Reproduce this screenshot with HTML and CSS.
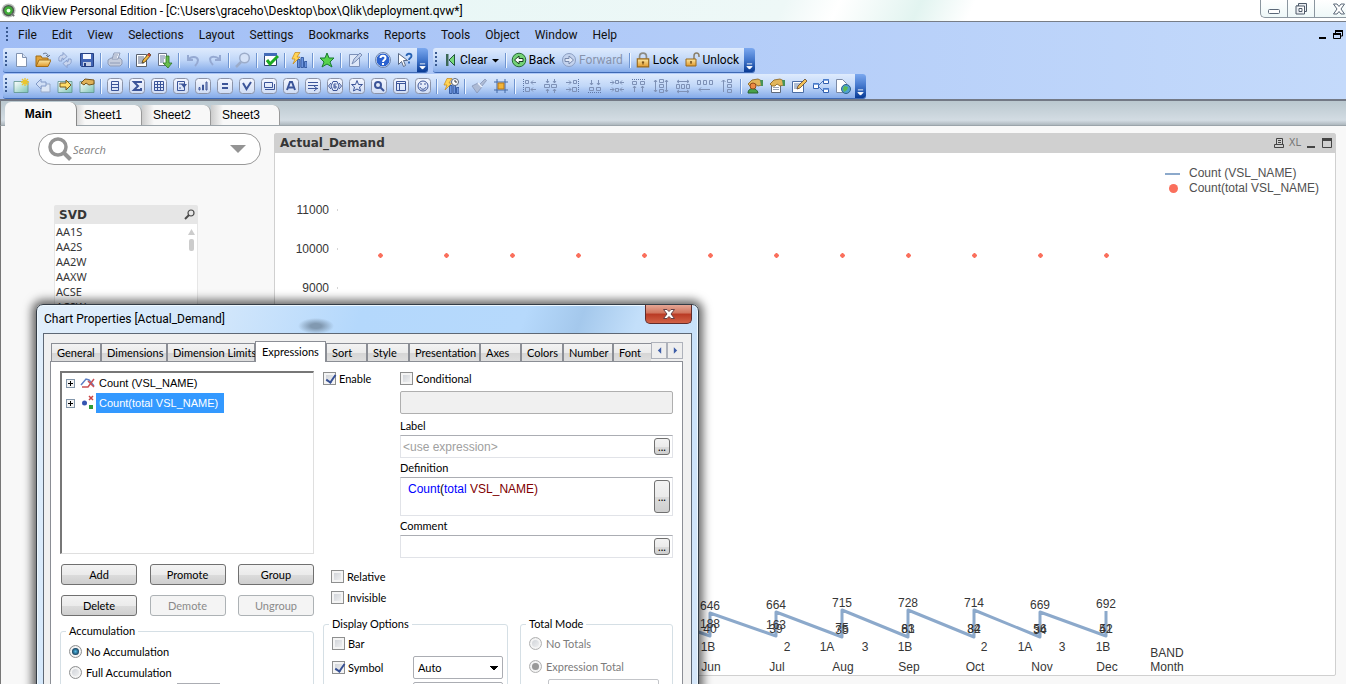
FILE: index.html
```html
<!DOCTYPE html>
<html lang="en">
<head>
<meta charset="utf-8">
<title>QlikView Personal Edition - [C:\Users\graceho\Desktop\box\Qlik\deployment.qvw*]</title>
<link rel="stylesheet" href="styles.css">
</head>
<body>
<svg class="defs" aria-hidden="true">
  <defs>
    <linearGradient id="gold" x1="0" y1="0" x2="0" y2="1"><stop offset="0" stop-color="#fde9a4"/><stop offset="1" stop-color="#e0982a"/></linearGradient>
    <linearGradient id="teal" x1="0" y1="0" x2="1" y2="1"><stop offset="0" stop-color="#ffffff"/><stop offset="1" stop-color="#7cc4b4"/></linearGradient>
    <linearGradient id="steel" x1="0" y1="0" x2="0" y2="1"><stop offset="0" stop-color="#f4f7ff"/><stop offset="1" stop-color="#cfdcf4"/></linearGradient>
    <symbol id="box" viewBox="0 0 16 16"><rect x=".5" y=".5" width="15" height="15" rx="3" fill="url(#steel)" stroke="#8b93a8"/></symbol>
    <symbol id="bars" viewBox="0 0 16 16"><path d="M6.500 7.500h2.500v8h-2.500zM10 5.500h2.500v10H10zM13.500 9.500H16v6h-2.500z" fill="#6b93dc" stroke="#31589f" stroke-width=".9"/><path d="M4 .5h5L6 5h3L2 12l2-5H1z" fill="#ffd456" stroke="#c48617" stroke-width=".7"/></symbol>
    <symbol id="folder" viewBox="0 0 16 16"><path d="M1 3.500h14v11H1z" fill="url(#teal)" stroke="#5d938c" stroke-width=".8"/></symbol>
    <symbol id="hand" viewBox="0 0 16 16"><path d="M1 6l4-4 6-1 4 2v4l-4 1-3-2-2 2H5L3 8z" fill="#e2b55a" stroke="#85601c" stroke-width=".8"/><path d="M13 2h3v6h-2z" fill="#489258"/></symbol>
    <symbol id="arrow-down" viewBox="0 0 8 8"><path d="M1 1h6M1 4h6L4 7z" fill="#fff" stroke="#fff"/></symbol>
    <symbol id="padlock" viewBox="0 0 14 14"><path d="M2 6h10v7H2z" fill="url(#gold)" stroke="#99681a"/><path d="M7 8v3M6 9h2" stroke="#6e4810"/></symbol>
  </defs>
</svg>
<div class="app">
  <header class="titlebar">
    <svg class="logo" viewBox="0 0 16 16"><circle cx="8" cy="8" r="7.500" fill="#b9bfb9"/><circle cx="8" cy="8" r="6" fill="#4d5650"/><circle cx="8" cy="8" r="4.500" fill="#3fae36"/><circle cx="8" cy="8" r="2" fill="#e9ffe5"/><path d="M11 11l3 3" stroke="#6d746f" stroke-width="2"/></svg>
    <h1>QlikView Personal Edition - [C:\Users\graceho\Desktop\box\Qlik\deployment.qvw*]</h1>
    <div class="window-buttons">
      <button aria-label="Minimize"><svg viewBox="0 0 14 14"><rect x="1.500" y="7.500" width="11" height="4" rx="1" fill="#fff" stroke="#5b6878"/></svg></button>
      <button aria-label="Restore"><svg viewBox="0 0 14 14"><path d="M4.500 1.500h8v8h-2v2.500h-8.500v-8h2.500z" fill="#e9edf2" stroke="#4e5a68"/><path d="M2 4h8.500v8M5 6.500h3v3H5z" fill="#fff" stroke="#4e5a68"/></svg></button>
      <button class="wide" aria-label="Close"><svg viewBox="0 0 14 14"><path d="M1.500 2h3.500l2 2.500L9 2h3.500L9 7l3.500 5H9L7 9.500 5 12H1.500L5 7z" fill="#fff" stroke="#5b6878"/></svg></button>
    </div>
  </header>

  <div class="chrome">
    <nav class="menubar">
      <span class="grip"></span>
      <a href="#file">File</a><a href="#edit">Edit</a><a href="#view">View</a><a href="#selections">Selections</a><a href="#layout">Layout</a><a href="#settings">Settings</a><a href="#bookmarks">Bookmarks</a><a href="#reports">Reports</a><a href="#tools">Tools</a><a href="#object">Object</a><a href="#window">Window</a><a href="#help">Help</a>
      <div class="mdi-buttons">
        <button aria-label="Minimize document"><svg viewBox="0 0 12 12"><path d="M2 8h7v2H2z"/></svg></button>
        <button aria-label="Restore document"><svg viewBox="0 0 12 12"><path d="M3.500 4V2h7v5H9" fill="none" stroke="#000"/><path d="M3 1h8v2H3zM1 4h8v2H1z"/><path d="M1.500 5v4.500h7V5" fill="none" stroke="#000"/></svg></button>
      </div>
    </nav>

    <div class="toolbars">
      <div class="toolbar">
        <span class="grip"></span>
        <button class="tool" aria-label="New"><svg viewBox="0 0 16 16"><path d="M3.500 1.500h6l4 4v9h-10z" fill="#fff" stroke="#8193b1"/><path d="M9.500 1.500v4h4" fill="#dce6f6" stroke="#8193b1"/></svg></button>
        <button class="tool" aria-label="Open"><svg viewBox="0 0 16 16"><path d="M1 14V4h5l1 2h6v8z" fill="#e1a43b" stroke="#a26c17"/><path d="M1 14.500L4 8h12l-3 6.500z" fill="url(#gold)" stroke="#a26c17"/><path d="M8 2c3-2 5 0 5 2M11 3l2 2 2-2" fill="none" stroke="#69788f"/></svg></button>
        <button class="tool" aria-label="Refresh"><svg viewBox="0 0 16 16"><path d="M2 9C1 5 3 3 6 3V.500L10 4.500 6 8V6C5 6 4 7 5 9zM14 7c1 4-1 6-4 6v2.500L6 11.500 10 8v2c1 0 2-1 1-3z" fill="#c8d5ee" stroke="#7f96c4" stroke-width=".8"/></svg></button>
        <button class="tool" aria-label="Save"><svg viewBox="0 0 16 16"><path d="M1.500 1.500h13v13h-12l-1-1z" fill="#4164b4" stroke="#253f82"/><path d="M4 2h8v5H4z" fill="#f4f7ff"/><path d="M4 10h8v4H4z" fill="#c2cce3"/><path d="M5 11h2v3H5z" fill="#253f82"/></svg></button>
        <i class="sep"></i>
        <button class="tool" aria-label="Print"><svg viewBox="0 0 16 16"><path d="M1 8l3-2h9l2 2v4l-2 2H3l-2-2z" fill="#c5cddd" stroke="#8e9bb7"/><path d="M5 7l2-6h6l-2 6z" fill="#edf1fa" stroke="#8e9bb7"/><path d="M3 11h10M7 3h4M6 5h4" stroke="#8e9bb7"/></svg></button>
        <i class="sep"></i>
        <button class="tool" aria-label="Edit script"><svg viewBox="0 0 16 16"><path d="M1.500 2.500h10v12h-10z" fill="#fff" stroke="#58606d"/><path d="M3 5h6M3 7h6M3 9h6M3 11h6" stroke="#5c6b85"/><path d="M7 11l1-3 6-7 2 2-6 7z" fill="#f0b73d" stroke="#42381f" stroke-width=".8"/><path d="M13 2l2 2" stroke="#c93f32" stroke-width="2"/></svg></button>
        <button class="tool" aria-label="Reload"><svg viewBox="0 0 16 16"><path d="M1.500 1.500h8v12h-8z" fill="#fff" stroke="#677287"/><path d="M3 4h5M3 6h5M3 8h4M3 10h4" stroke="#65789f"/><path d="M9 4h3v7h3l-4 5-5-5h3z" fill="#68bd4d" stroke="#2f762a" stroke-width=".8"/></svg></button>
        <i class="sep"></i>
        <button class="tool" aria-label="Undo"><svg viewBox="0 0 16 16"><path d="M3 3v5h5M3 8c3-4 9-4 10 0 0 3-1 4-3 6" fill="none" stroke="#95a9d2" stroke-width="2"/></svg></button>
        <button class="tool" aria-label="Redo"><svg viewBox="0 0 16 16"><path d="M13 3v5H8M13 8C10 4 4 4 3 7c0 3 1 4 3 6" fill="none" stroke="#95a9d2" stroke-width="2"/></svg></button>
        <i class="sep"></i>
        <button class="tool" aria-label="Search"><svg viewBox="0 0 16 16"><circle cx="9.500" cy="6" r="4.800" fill="#d5e2f7" stroke="#9cacc9" stroke-width="1.500"/><path d="M6 10l-5 5" stroke="#9cacc9" stroke-width="2.500"/></svg></button>
        <i class="sep"></i>
        <button class="tool" aria-label="Current selections"><svg viewBox="0 0 16 16"><path d="M1.500 1.500h12v12h-12z" fill="#fff" stroke="#31456e"/><path d="M1 1h13v3H1z" fill="#426bb8"/><path d="M4 8l3 4 8-8" fill="none" stroke="#1daa21" stroke-width="3"/></svg></button>
        <i class="sep"></i>
        <button class="tool" aria-label="Quick chart wizard"><svg><use href="#bars"/></svg></button>
        <i class="sep"></i>
        <button class="tool" aria-label="Add bookmark"><svg viewBox="0 0 16 16"><path d="M8 1l2 5h5l-4 4 2 5-5-3-5 3 2-5-4-4h5z" fill="#57d34d" stroke="#187b31"/></svg></button>
        <i class="sep"></i>
        <button class="tool" aria-label="Notes"><svg viewBox="0 0 16 16"><path d="M2.500 2.500h10v12h-10z" fill="#dfe8f8" stroke="#7c90b8"/><path d="M5 12l2-5 6-6 2 2-6 6z" fill="#c5d2ea" stroke="#7c90b8"/></svg></button>
        <i class="sep"></i>
        <button class="tool" aria-label="Help"><svg viewBox="0 0 16 16"><circle cx="8" cy="8" r="7" fill="#2b62d0" stroke="#e5edf9"/><circle cx="8" cy="8" r="7.500" fill="none" stroke="#49618d" stroke-width=".7"/><path d="M5.500 6c0-3 5-3 5 0 0 2-2.500 2-2.500 4M8 11v2" fill="none" stroke="#fff" stroke-width="2"/></svg></button>
        <button class="tool" aria-label="Context help"><svg viewBox="0 0 16 16"><path d="M1.500 1.500v11l3-3 2 5 2-1-2-5h4z" fill="#fff" stroke="#596985"/><path d="M9.500 4c0-3 5-3 5 0 0 2-2.500 2-2.500 4M12 9.500v2" fill="none" stroke="#2862b3" stroke-width="1.800"/></svg></button>
        <button class="overflow" aria-label="More standard tools"><svg><use href="#arrow-down"/></svg></button>
      </div>
      <div class="toolbar navigation">
        <span class="grip"></span>
        <button class="command"><svg viewBox="0 0 16 16"><path d="M4 2h2.500v12H4z" fill="#3c6857"/><path d="M12.500 2.500v11L7 8z" fill="#75d979" stroke="#24563f"/></svg>Clear<svg class="caret" viewBox="0 0 7 5"><path d="M0 1h7L3.500 4.500z"/></svg></button>
        <i class="sep"></i>
        <button class="command"><svg viewBox="0 0 16 16"><circle cx="8" cy="8" r="6.800" fill="#74d376" stroke="#266936"/><path d="M3.500 8L8 4v2.500h4v3H8V12z" fill="#fff" stroke="#193c22"/></svg>Back</button>
        <button class="command" disabled><svg viewBox="0 0 16 16"><circle cx="8" cy="8" r="6.500" fill="#c4d3ee" stroke="#8b9ec2"/><path d="M12.500 8L8 4v2.500H4v3h4V12z" fill="#e1e9f7" stroke="#7889ac"/></svg>Forward</button>
        <i class="sep"></i>
        <button class="command"><svg viewBox="0 0 14 14"><path d="M4 6V4c0-4 6-4 6 0v2" fill="none" stroke="#8c8b84" stroke-width="1.500"/><use href="#padlock"/></svg>Lock</button>
        <button class="command"><svg viewBox="0 0 16 16"><path d="M9 7V4c0-4 5-4 5 0v1" fill="none" stroke="#8b806b" stroke-width="1.500"/><path d="M1 7h10v7H1z" fill="url(#gold)" stroke="#99681a"/><path d="M6 9v3M5 10h2" stroke="#6e4810"/></svg>Unlock</button>
        <button class="overflow" aria-label="More navigation tools"><svg><use href="#arrow-down"/></svg></button>
      </div>
    </div>

    <div class="toolbars">
      <div class="toolbar">
        <span class="grip"></span>
        <button class="tool" aria-label="Add sheet"><svg viewBox="0 0 16 16"><use href="#folder"/><path d="M12 0v8M8 4h8M9 1l6 6M15 1L9 7" stroke="#edc52d" stroke-width="1.300"/></svg></button>
        <button class="tool" aria-label="Promote sheet"><svg viewBox="0 0 16 16"><path d="M6 6h9v8H6z" fill="#dce6f5" stroke="#97a9c8"/><path d="M1 6l5-5v3h5v4H6v3z" fill="#d1dff5" stroke="#8299c7"/></svg></button>
        <button class="tool" aria-label="Demote sheet"><svg viewBox="0 0 16 16"><use href="#folder"/><path d="M14 7L9 2v3H3v4h6v3z" fill="#ffdc68" stroke="#77561b"/></svg></button>
        <button class="tool" aria-label="Sheet properties"><svg viewBox="0 0 16 16"><use href="#folder"/><path d="M2 5l4-4 9 1v4l-5 1-3-2-2 2z" fill="#dfb258" stroke="#74541d"/></svg></button>
        <i class="sep"></i>
        <button class="tool" aria-label="List box"><svg viewBox="0 0 16 16"><use href="#box"/><path d="M4.500 3.500h7v9h-7zM5 6.500h6M5 9.500h6" class="ink"/></svg></button>
        <button class="tool" aria-label="Statistics box"><svg viewBox="0 0 16 16"><use href="#box"/><path d="M12 5V4H5l4 4-4 4h7v-2" class="ink bold"/></svg></button>
        <button class="tool" aria-label="Table box"><svg viewBox="0 0 16 16"><use href="#box"/><path d="M3.500 3.500h9v9h-9zM6.500 3v9M9.500 3v9M3 6.500h9M3 9.500h9" class="ink"/></svg></button>
        <button class="tool" aria-label="Multi box"><svg viewBox="0 0 16 16"><use href="#box"/><path d="M4.500 3.500h7v9h-7zM6 6h5M6 10h2" class="ink"/><path d="M8 6h6l-3 4z" fill="#3c5599"/></svg></button>
        <button class="tool" aria-label="Chart"><svg viewBox="0 0 16 16"><use href="#box"/><path d="M4 9.500h1V12H4zM7.500 7h1v5h-1zM11 4h1v8h-1z" class="ink"/></svg></button>
        <button class="tool" aria-label="Input box"><svg viewBox="0 0 16 16"><use href="#box"/><path d="M5 6h6M5 10h6" class="ink bold"/></svg></button>
        <button class="tool" aria-label="Current selections box"><svg viewBox="0 0 16 16"><use href="#box"/><path d="M4 5l3.500 6L12 4" class="ink bold"/></svg></button>
        <button class="tool" aria-label="Button"><svg viewBox="0 0 16 16"><use href="#box"/><path d="M3.500 4.500h8v5h-8zM4 11.500h9.500V6" class="ink"/></svg></button>
        <button class="tool" aria-label="Text object"><svg viewBox="0 0 16 16"><use href="#box"/><path d="M4 12L7 4h2l3 8M5.500 9.500h5" class="ink bold"/></svg></button>
        <button class="tool" aria-label="Line object"><svg viewBox="0 0 16 16"><use href="#box"/><path d="M3 4.500h10M3 7.500h10M3 10.500h10M9 8l3 2.500L9 13" class="ink"/></svg></button>
        <button class="tool" aria-label="Slider"><svg viewBox="0 0 16 16"><use href="#box"/><path d="M4 5L1.500 8 4 11M12 5l2.500 3-2.500 3M6 3.500h4l2 4.500-2 4.500H6L4 8zM9.500 6H7v4h2V8H7" class="ink"/></svg></button>
        <button class="tool" aria-label="Bookmark object"><svg viewBox="0 0 16 16"><use href="#box"/><path d="M8 2.500l1.500 4H13.500l-3 2.500 1 4L8 11l-3.500 2 1-4-3-2.500h4z" class="ink"/></svg></button>
        <button class="tool" aria-label="Search object"><svg viewBox="0 0 16 16"><use href="#box"/><circle cx="7" cy="7" r="3" class="ink bold"/><path d="M9 9l4 4" class="ink bold"/></svg></button>
        <button class="tool" aria-label="Container"><svg viewBox="0 0 16 16"><use href="#box"/><path d="M3.500 3.500h9v9h-9zM4 5.500h8M6.500 6v6" class="ink"/></svg></button>
        <button class="tool" aria-label="Custom object"><svg viewBox="0 0 16 16"><use href="#box"/><circle cx="8" cy="8" r="5" class="ink"/><path d="M5 9c1 3 5 3 6 0M6 5v2M10 5v2" class="ink"/></svg></button>
        <i class="sep"></i>
        <button class="tool" aria-label="Time chart wizard"><svg viewBox="0 0 16 16"><use href="#bars"/><circle cx="12" cy="4" r="3.500" fill="#fff" stroke="#56647b"/><path d="M12 2v2h2" fill="none" stroke="#333"/></svg></button>
        <i class="sep"></i>
        <button class="tool" aria-label="Format painter"><svg viewBox="0 0 16 16"><path d="M9 6l5-5 1.500 1.500L11 8zM1 8l6-3 4 4-5 6z" fill="#aebbd5" stroke="#8796b6" stroke-width=".8"/><path d="M7 5l4 4" stroke="#eef3fd" stroke-width="1.500"/></svg></button>
        <button class="tool" aria-label="Design grid"><svg viewBox="0 0 16 16"><path d="M4 1v14M12 1v14M1 4h14M1 12h14" stroke="#4269a5"/><path d="M5 5h6v6H5z" fill="#f2b437" stroke="#b67718"/></svg></button>
        <i class="sep"></i>
        <button class="tool" aria-label="Align left"><svg viewBox="0 0 16 16"><path d="M2.500 1v14" class="dots"/><path d="M4.500 2.500h3v3h-3zM4.500 9.500h4v4h-4zM10 4.500h5M10 11.500h5M12 2.500l-2 2 2 2M12 9.500l-2 2 2 2" class="mute"/></svg></button>
        <button class="tool" aria-label="Center horizontally"><svg viewBox="0 0 16 16"><path d="M4.500 1v4M11.500 1v4M4.500 11v4M11.500 11v4M1.500 6.500h5v3h-5zM8.500 6.500h5v3h-5zM3 3l1.500 2L6 3M10 3l1.500 2L13 3M3 13l1.500-2L6 13M10 13l1.500-2 1.500 2" class="mute"/></svg></button>
        <button class="tool" aria-label="Align right"><svg viewBox="0 0 16 16"><path d="M13.500 1v14" class="dots"/><path d="M8.500 2.500h3v3h-3zM7.500 9.500h4v4h-4zM1 4.500h5M1 11.500h5M4 2.500l2 2-2 2M4 9.500l2 2-2 2" class="mute"/></svg></button>
        <button class="tool" aria-label="Align bottom"><svg viewBox="0 0 16 16"><path d="M1 14.500h14" class="dots"/><path d="M2.500 9.500h4v3h-4zM9.500 9.500h4v3h-4zM4.500 2v5M11.500 2v5M3 5l1.500 2L6 5M10 5l1.500 2L13 5" class="mute"/></svg></button>
        <button class="tool" aria-label="Center vertically"><svg viewBox="0 0 16 16"><path d="M6.500 2.500h3v3h-3zM6.500 10.500h3v3h-3zM1 4.500h4M11 4.500h4M1 11.500h4M11 11.500h4M3 2.500l2 2-2 2M13 2.500l-2 2 2 2M3 9.500l2 2-2 2M13 9.500l-2 2 2 2" class="mute"/></svg></button>
        <button class="tool" aria-label="Align top"><svg viewBox="0 0 16 16"><path d="M1 1.500h14" class="dots"/><path d="M1.500 3.500h4v3h-4zM9.500 3.500h4v3h-4zM3.500 8v6M11.500 8v6M2 10l1.500-2L5 10M10 10l1.500-2 1.500 2" class="mute"/></svg></button>
        <button class="tool" aria-label="Space vertically"><svg viewBox="0 0 16 16"><path d="M6.500 1.500h4v3h-4zM6.500 6.500h4v3h-4zM6.500 11.500h4v3h-4zM2.500 2v12M13.500 2v12M1 4l1.500-2L4 4M12 12l1.500 2 1.500-2M1 12l1.500 2L4 12M12 4l1.500-2L15 4" class="mute"/></svg></button>
        <button class="tool" aria-label="Space horizontally"><svg viewBox="0 0 16 16"><path d="M1.500 6.500h3v4h-3zM6.500 6.500h3v4h-3zM11.500 6.500h3v4h-3zM2 3.500h12M2 13.500h12M4 2L2 3.500 4 5M12 2l2 1.500L12 5M12 12l2 1.500-2 1.500M4 12l-2 1.500L4 15" class="mute"/></svg></button>
        <button class="tool" aria-label="Adjust left"><svg viewBox="0 0 16 16"><path d="M.5 2.500h3v4h-3zM6.500 2.500h3v4h-3zM12.500 2.500h3v4h-3zM2 11.500h11M4 9.500l-2 2 2 2" class="mute"/></svg></button>
        <button class="tool" aria-label="Adjust top"><svg viewBox="0 0 16 16"><path d="M8.500 1.500h4v3h-4zM8.500 6.500h4v3h-4zM8.500 11.500h4v3h-4zM4.500 2v12M2.500 4l2-2 2 2" class="mute"/></svg></button>
        <i class="sep"></i>
        <button class="tool" aria-label="User preferences"><svg viewBox="0 0 16 16"><path d="M1 15c0-6 9-6 10 0z" fill="#48a24b" stroke="#27632d"/><use href="#hand"/><circle cx="6" cy="8" r="3" fill="#ee8b45" stroke="#934b1b"/></svg></button>
        <button class="tool" aria-label="Document properties"><svg viewBox="0 0 16 16"><path d="M2.500 4.500h9v10h-9z" fill="#fff" stroke="#606b7b"/><path d="M4 9.500h6M4 11.500h6" stroke="#9aa4b5"/><use href="#hand"/></svg></button>
        <button class="tool" aria-label="Edit module"><svg viewBox="0 0 16 16"><path d="M1.500 3.500h11v11h-11z" fill="#fff" stroke="#4b6da3"/><path d="M3 6h7M3 8h7M3 10h5" stroke="#607fac"/><path d="M6 11l1-3 7-7 2 2-7 7z" fill="#f3c157" stroke="#61452a" stroke-width=".8"/></svg></button>
        <button class="tool" aria-label="Table viewer"><svg viewBox="0 0 16 16"><path d="M5 8l5-5M5 8l5 5" stroke="#4774bd"/><path d="M.5 5.500h5v5h-5zM10.500 1.500h5v4h-5zM10.500 10.500h5v4h-5z" fill="#fff" stroke="#315fae"/><path d="M0 6h6M10 2h6M10 11h6" stroke="#5688d5" stroke-width="1.500"/></svg></button>
        <button class="tool" aria-label="Web view"><svg viewBox="0 0 16 16"><path d="M1.500 1.500h6l4 4v9h-10z" fill="#fff" stroke="#7c8aa5"/><circle cx="11" cy="11" r="4.500" fill="#4fa1d0" stroke="#2e628c"/><path d="M9 8l4 1-1 3-3 2-1-3z" fill="#5dbb52"/></svg></button>
        <button class="overflow" aria-label="More design tools"><svg><use href="#arrow-down"/></svg></button>
      </div>
    </div>
  </div>

  <nav class="sheet-tabs">
    <a class="active" href="#main">Main</a><a href="#sheet1">Sheet1</a><a href="#sheet2">Sheet2</a><a href="#sheet3">Sheet3</a>
  </nav>

  <main class="sheet">
    <aside class="selectors">
      <div class="search">
        <svg class="lens" viewBox="0 0 24 24"><circle cx="10" cy="10" r="8" fill="none" stroke="#949494" stroke-width="3.500"/><path d="M15.500 15.500l7 7" stroke="#949494" stroke-width="4"/></svg>
        <input type="text" aria-label="Search" placeholder="Search">
        <svg class="drop" viewBox="0 0 16 9"><path d="M0 0h16L8 8z" fill="#949494"/></svg>
      </div>
      <section class="listbox">
        <h2>SVD<svg viewBox="0 0 11 11"><circle cx="7" cy="4" r="3" fill="none" stroke="#4b4b4b" stroke-width="1.200"/><path d="M5 6l-4 4" stroke="#4b4b4b" stroke-width="2"/></svg></h2>
        <div class="listbody">
          <ul><li>AA1S</li><li>AA2S</li><li>AA2W</li><li>AAXW</li><li>ACSE</li><li>ACSW</li></ul>
          <div class="scroll"><svg viewBox="0 0 7 6"><path d="M0 6h7L3.500 0z" fill="#ccc"/></svg><span></span></div>
        </div>
      </section>
    </aside>

    <section class="chart">
      <h2><span>Actual_Demand</span>
        <svg viewBox="0 0 12 12"><path d="M3.500 1.500h6v6h-6zM1.500 7.500h9v3h-9zM5 3.500h3M5 5.500h3" fill="none" stroke="#444"/></svg>
        <span class="xl">XL</span>
        <svg viewBox="0 0 12 12"><path d="M2 9h8v2H2z" fill="#444"/></svg>
        <svg viewBox="0 0 12 12"><path d="M1.500 1.500h9v9h-9z" fill="none" stroke="#444"/><path d="M1 1h10v3H1z" fill="#444"/></svg>
      </h2>
      <div class="plot">
        <svg class="canvas" role="img" aria-label="Actual demand by month and band">
          <g class="axis"><text x="54" y="61">11000</text><text x="54" y="100">10000</text><text x="54" y="139">9000</text></g>
          <path d="M62 57h1M62 96h1M62 135h1" stroke="#aaa"/>
          <g fill="#fa6f5c"><path id="m" d="M105 100h1l2 2v1l-2 2h-1l-2-2v-1z"/><use href="#m" x="66"/><use href="#m" x="132"/><use href="#m" x="198"/><use href="#m" x="264"/><use href="#m" x="330"/><use href="#m" x="396"/><use href="#m" x="462"/><use href="#m" x="528"/><use href="#m" x="594"/><use href="#m" x="660"/><use href="#m" x="726"/></g>
          <path d="M369 460L435 483V460L501 483V459L567 484V457L633 484V457L699 484V457L765 484V459L831 483V458" fill="none" stroke="#8ca9cb" stroke-width="3" stroke-linejoin="round"/>
          <g class="values">
            <text x="435" y="457">646</text><text x="501" y="456">664</text><text x="567" y="454">715</text><text x="633" y="454">728</text><text x="699" y="454">714</text><text x="765" y="456">669</text><text x="831" y="455">692</text>
            <text x="435" y="475">188</text><text x="435" y="480">40</text>
            <text x="501" y="476">163</text><text x="501" y="480">39</text>
            <text x="567" y="479">75</text><text x="567" y="481">35</text>
            <text x="633" y="480">83</text><text x="633" y="480">61</text>
            <text x="699" y="480">84</text><text x="699" y="480">32</text>
            <text x="765" y="480">56</text><text x="765" y="481">34</text>
            <text x="831" y="480">41</text><text x="831" y="480">52</text>
            <text x="433" y="498">1B</text><text x="512" y="498">2</text><text x="552" y="498">1A</text><text x="590" y="498">3</text><text x="630" y="498">1B</text><text x="709" y="498">2</text><text x="750" y="498">1A</text><text x="787" y="498">3</text><text x="828" y="498">1B</text>
            <text x="436" y="518">Jun</text><text x="502" y="518">Jul</text><text x="568" y="518">Aug</text><text x="634" y="518">Sep</text><text x="700" y="518">Oct</text><text x="767" y="518">Nov</text><text x="832" y="518">Dec</text>
            <text x="892" y="504">BAND</text><text x="892" y="518">Month</text>
          </g>
        </svg>
        <ul class="legend"><li><i class="line"></i>Count (VSL_NAME)</li><li><i class="dot"></i>Count(total VSL_NAME)</li></ul>
      </div>
    </section>
  </main>

  <div class="dialog" role="dialog" aria-labelledby="dialog-title">
    <div class="dialog-title"><h2 id="dialog-title">Chart Properties [Actual_Demand]</h2>
      <button class="close" aria-label="Close dialog"><svg viewBox="0 0 14 12"><path d="M1.500 1.500H5l2 2 2-2h3.500L9 6l3.500 4.500H9l-2-2-2 2H1.500L5 6z" fill="#fff" stroke="#654045"/></svg></button>
    </div>
    <div class="client">
      <div class="tabs" role="tablist">
        <button class="t50">General</button><button class="t66">Dimensions</button><button class="t88">Dimension Limits</button><button class="current">Expressions</button><button class="t41">Sort</button><button class="t42">Style</button><button class="t71">Presentation</button><button class="t41">Axes</button><button class="t42">Colors</button><button class="t50">Number</button><button class="last">Font</button>
        <div class="tab-scroll"><button aria-label="Previous tabs"><svg viewBox="0 0 6 8"><path d="M5 0v8L1 4z" fill="#3d5da8"/></svg></button><button aria-label="More tabs"><svg viewBox="0 0 6 8"><path d="M1 0v8l4-4z" fill="#3d5da8"/></svg></button></div>
      </div>
      <div class="panel">
        <div class="left">
          <ul class="tree">
            <li><i class="plus"></i><svg viewBox="0 0 16 16"><path d="M1 10l5-6 3 1 5 6" fill="none" stroke="#5e80c6" stroke-width="1.500"/><path d="M2 12h6l6-8M8 6l6 6" fill="none" stroke="#cb5054" stroke-width="1.500"/></svg><span>Count (VSL_NAME)</span></li>
            <li class="selected"><i class="plus"></i><svg viewBox="0 0 16 16"><circle cx="4.500" cy="8" r="2.500" fill="#3455b2"/><path d="M9 10h4v4H9z" fill="#2e9d38"/><path d="M9 1l4 4M13 1L9 5" stroke="#c94343" stroke-width="1.500"/></svg><span>Count(total VSL_NAME)</span></li>
          </ul>
          <div class="actions"><button>Add</button><button>Promote</button><button>Group</button><button>Delete</button><button disabled>Demote</button><button disabled>Ungroup</button></div>
          <fieldset class="accumulation"><legend>Accumulation</legend>
            <label><input type="radio" name="acc" checked>No Accumulation</label>
            <label><input type="radio" name="acc">Full Accumulation</label>
            <input class="steps" type="text" aria-label="Steps back">
          </fieldset>
        </div>
        <div class="right">
          <div class="definition-row">
            <label><input type="checkbox" checked>Enable</label>
            <div class="fields">
              <label><input type="checkbox">Conditional</label>
              <input class="conditional" type="text" aria-label="Condition" disabled>
              <label class="caption" for="expr-label">Label</label>
              <div class="field"><input id="expr-label" type="text" placeholder="&lt;use expression&gt;"><button aria-label="Edit label">...</button></div>
              <span class="caption" id="def-label">Definition</span>
              <div class="field tall"><div class="code" role="textbox" contenteditable="true" aria-labelledby="def-label"><b>Count</b>(<b>total</b> <em>VSL_NAME)</em></div><button aria-label="Edit definition">...</button></div>
              <label class="caption" for="expr-comment">Comment</label>
              <div class="field"><input id="expr-comment" type="text"><button aria-label="Edit comment">...</button></div>
            </div>
          </div>
          <div class="flags"><label><input type="checkbox">Relative</label><label><input type="checkbox">Invisible</label></div>
          <div class="groups">
            <fieldset class="display"><legend>Display Options</legend>
              <label><input type="checkbox">Bar</label>
              <div class="option"><label><input type="checkbox" checked>Symbol</label><select aria-label="Symbol type"><option>Auto</option></select></div>
              <div class="option end"><select aria-label="Line type"><option></option></select></div>
            </fieldset>
            <fieldset class="total"><legend>Total Mode</legend>
              <label><input type="radio" name="total" disabled>No Totals</label>
              <label><input type="radio" name="total" checked disabled>Expression Total</label>
              <select aria-label="Aggregation" disabled><option></option></select>
            </fieldset>
          </div>
        </div>
      </div>
    </div>
  </div>
</div>
</body>
</html>
```

FILE: styles.css
```css
* { box-sizing: border-box; }
body { margin: 0; font-family: "Liberation Sans", Arial, sans-serif; font-size: 12px; color: #363636; }
h1, h2, ul, fieldset { margin: 0; padding: 0; font-weight: normal; }
ul { list-style: none; }
button, input, select { font: inherit; color: inherit; margin: 0; padding: 0; border: 0; background: none; }
svg { display: block; flex: none; }
.defs { position: absolute; width: 0; height: 0; }
.app { position: relative; height: 100vh; display: flex; flex-direction: column; overflow: hidden; background: #f8f8f8; }

.titlebar { height: 22px; flex: none; display: flex; align-items: center; border-bottom: 1px solid #777d86; background: linear-gradient(115deg, #fff 0 22%, #e9f7f6 32%, #eef8f7 58%, #fff 62%, #e2f4f0 68%, #fff 72%); }
.logo { width: 15px; height: 15px; margin: 0 5px 0 1px; }
.titlebar h1 { flex: 1; color: #000; font: 12px/18px Roboto, "Noto Sans", sans-serif; }
.window-buttons { display: flex; align-self: flex-start; height: 18px; border: 1px solid #8b969f; border-top: 0; border-right: 0; border-radius: 0 0 0 5px; background: linear-gradient(#fff, #eef8f8); }
.window-buttons button { width: 27px; border-right: 1px solid #8b969f; display: grid; place-items: center; }
.window-buttons .wide { width: 31px; border: 0; justify-items: end; }
.window-buttons svg { width: 14px; height: 14px; }

.chrome { flex: none; background: linear-gradient(90deg, #a0bdf5, #c4dafb); border-bottom: 2px solid #737985; }
.menubar { height: 26px; display: flex; align-items: center; padding: 0 2px 0 5px; font: 12px/16px Roboto, "Noto Sans", sans-serif; }
.menubar a { color: #111; text-decoration: none; margin-right: 15px; }
.menubar .grip { margin-right: 8px; }
.mdi-buttons { margin-left: auto; display: flex; gap: 3px; }
.mdi-buttons svg { width: 12px; height: 12px; }
.grip { width: 5px; height: 16px; flex: none; background: repeating-linear-gradient(#395990 0 2px, transparent 2px 4px) 1px 0 / 2px 14px no-repeat; }
.toolbars { display: flex; gap: 5px; padding-left: 3px; height: 25px; margin-bottom: 1px; }
.toolbars:last-child { margin-bottom: 0; }
.toolbar { display: flex; align-items: center; border-radius: 3px; border-bottom: 1px solid #3e69b4; background: linear-gradient(#dfebfd, #c1d7f8 50%, #85abe9); }
.toolbar .grip { margin: 0 1px; }
.tool { width: 22px; height: 22px; display: grid; place-items: center; }
.tool svg { width: 16px; height: 16px; }
.sep { width: 6px; height: 15px; flex: none; background: linear-gradient(90deg, #6f95d1 50%, #eff6ff 50%) 2px 0 / 2px 15px no-repeat; }
.overflow { width: 11px; height: 24px; margin-left: 1px; border-radius: 0 3px 3px 0; background: linear-gradient(#7ba8ef, #4377cc 50%, #083a94); display: flex; align-items: flex-end; justify-content: center; padding-bottom: 2px; }
.overflow svg { width: 7px; height: 7px; }
.command { display: flex; align-items: center; color: #000; font: 12px/16px Roboto, "Noto Sans", sans-serif; margin-right: 4px; }
.command svg { width: 16px; height: 16px; margin: 0 2px; }
.command .caret { width: 7px; height: 5px; margin: 0 0 0 4px; }
.command:disabled { color: #8793ac; }
.ink { fill: none; stroke: #3c5599; }
.ink.bold { stroke-width: 2; }
.mute { fill: none; stroke: #7e91b6; stroke-width: 1; }
.dots { stroke: #6078a6; stroke-dasharray: 1 1; }

.sheet-tabs { height: 25px; flex: none; display: flex; align-items: flex-end; padding-left: 4px; border-left: 1px solid #777; border-bottom: 1px solid #9ba4aa; background: linear-gradient(#bac8cf, #d3dce3 80%, #aeb8be); }
.sheet-tabs a { width: 69px; height: 20px; padding-left: 11px; line-height: 21px; color: #000; text-decoration: none; border-radius: 0 7px 0 0; border-right: 1px solid #999; background: linear-gradient(90deg, #ccc, #f8f8f8 12px); }
.sheet-tabs .active { z-index: 1; width: 72px; height: 24px; margin: 0 -4px -1px 0; padding: 0 4px 0 0; text-align: center; line-height: 25px; font-weight: bold; border-radius: 6px 7px 0 0; background: #f8f8f8; border-right-color: #888; }
.sheet { flex: 1; min-height: 0; display: flex; border-left: 1px solid #777; }
.selectors { width: 273px; flex: none; padding: 7px 13px 0 37px; }
.search { height: 32px; border: 1px solid #999; border-radius: 16px; background: #fff; display: flex; align-items: center; padding: 0 14px 0 9px; }
.lens { width: 24px; height: 24px; }
.search input { flex: 1; min-width: 0; padding-left: 1px; font: italic 11px "Open Sans", sans-serif; outline: 0; }
.search input::placeholder { color: #808080; opacity: 1; }
.drop { width: 16px; height: 9px; }
.listbox { width: 144px; margin: 40px 0 0 16px; }
.listbox h2 { height: 19px; display: flex; justify-content: space-between; align-items: center; padding: 0 3px 0 5px; border-radius: 2px 2px 0 0; background: #e6e6e6; font: bold 12px "DejaVu Sans", sans-serif; }
.listbox h2 svg { width: 11px; height: 11px; }
.listbody { display: flex; justify-content: space-between; border: 1px solid #e6e6e6; border-top: 0; background: #fff; }
.listbody ul { padding-left: 1px; font: 11px/15px "Noto Sans", sans-serif; }
.scroll { padding: 5px 2px; }
.scroll svg { width: 7px; height: 6px; }
.scroll span { display: block; width: 5px; height: 12px; margin: 4px 1px; border-radius: 2px; background: #ccc; }
.chart { flex: 1; min-width: 0; display: flex; flex-direction: column; margin: 7px 10px 8px 0; border: 1px solid #d0d0d0; border-radius: 2px; background: #fff; }
.chart h2 { height: 19px; flex: none; display: flex; align-items: center; gap: 4px; padding: 0 2px 2px 5px; background: #d0d0d0; font: bold 12px "DejaVu Sans", sans-serif; }
.chart h2 span:first-child { flex: 1; }
.chart h2 svg { width: 12px; height: 12px; }
.chart h2 .xl { font: 11px "DejaVu Sans Condensed", "Liberation Sans", sans-serif; color: #777; }
.plot { position: relative; flex: 1; min-height: 0; }
.canvas { width: 100%; height: 100%; }
.canvas text { fill: #363636; }
.axis text { text-anchor: end; }
.values text { text-anchor: middle; }
.legend { position: absolute; top: 13px; right: 15px; line-height: 15px; color: #505050; }
.legend li { display: flex; align-items: center; width: 155px; white-space: nowrap; }
.legend i { flex: none; }
.legend .line { width: 15px; height: 2px; margin-right: 9px; background: #8ca9cb; }
.legend .dot { width: 9px; height: 9px; margin: 0 11px 0 4px; border-radius: 5px; background: #fa6f5c; }

.dialog { position: absolute; left: 36px; top: 304px; width: 663px; padding: 0 6px 7px; color: #000; font-size: 11px; border: 1px solid #333c46; border-radius: 7px; background: radial-gradient(ellipse 18px 8px at 279px 21px, #8199b1, #8199b1 30%, #8199b100), linear-gradient(110deg, #e2effb 0, #d3e7fb 22%, #b4d8fc 40%, #b6d9fc 60%, #a4c8ec 67%, #c3dffa 74%, #d8e8fa); box-shadow: inset 0 0 0 1px #eef8ff, 0 0 10px 4px #0009; }
.dialog-title { height: 28px; display: flex; justify-content: space-between; align-items: flex-start; }
.dialog-title h2 { padding: 5px 0 0 1px; font: 12px/18px Roboto, "Noto Sans", sans-serif; }
.close { width: 47px; height: 19px; display: grid; place-items: center; border: 1px solid #612c2b; border-top: 0; border-radius: 0 0 5px 5px; background: linear-gradient(#e5a695, #d0745d 45%, #b93924 50%, #d26246); }
.close svg { width: 14px; height: 12px; }
.client { border: 1px solid #5e6875; background: #f0f0f0; padding: 7px 8px 12px 6px; font-family: Lato, Roboto, sans-serif; }
.tabs { height: 20px; display: flex; align-items: flex-end; }
.tabs > button { height: 18px; padding: 0 0 0 5px; text-align: left; white-space: nowrap; border: 1px solid #8b8e95; border-bottom: 0; background: linear-gradient(#f3f3f3, #ebebeb 50%, #d5d5d5 51%, #dedede); }
.tabs > button:first-child { margin-left: 1px; }
.tabs .current { width: 71px; height: 21px; margin-bottom: -1px; position: relative; background: #fff; padding: 0 0 2px 6px; }
.t41 { width: 41px; } .t42 { width: 42px; } .t50 { width: 50px; } .t66 { width: 66px; } .t71 { width: 71px; } .t88 { width: 88px; }
.tabs .last { flex: 1; border-right: 0; }
.tab-scroll { display: flex; height: 19px; align-items: flex-start; }
.tab-scroll button { width: 16px; height: 17px; border: 1px solid #aeb2bb; background: #eee; display: grid; place-items: center; }
.tab-scroll svg { width: 5px; height: 7px; }
.panel { display: flex; gap: 9px; padding: 9px; border: 1px solid #8b8e95; background: #fff; }
.left { width: 254px; flex: none; }
.right { flex: 1; min-width: 0; }
.tree { height: 183px; border: 1px solid #dfdfdf; border-top: 2px solid #777; border-left: 2px solid #777; font-family: "Liberation Sans", Arial, sans-serif; }
.tree li { display: flex; align-items: center; height: 20px; padding-left: 4px; }
.tree svg { width: 16px; height: 16px; margin: 0 0 0 5px; }
.tree span { height: 20px; line-height: 20px; padding: 0 6px 0 3px; }
.tree .selected span { color: #fff; background: #3399ff; }
.plus { width: 9px; height: 9px; border: 1px solid #8296aa; background: linear-gradient(#000, #000) center / 5px 1px no-repeat, linear-gradient(#000, #000) center / 1px 5px no-repeat, #f2f2f2; }
.actions { display: grid; grid-template-columns: repeat(3, 76px); justify-content: space-between; gap: 10px 0; margin: 10px 0 8px 1px; }
.actions button, .field button { border: 1px solid #707070; border-radius: 3px; background: linear-gradient(#f3f3f3, #ebebeb 50%, #dcdcdc 51%, #cfcfcf); }
.actions button { height: 21px; }
.actions button:disabled { color: #8a8a8a; border-color: #adb2b5; background: #f4f4f4; }
label { display: flex; align-items: center; }
input[type="checkbox"], input[type="radio"] { appearance: none; width: 13px; height: 13px; flex: none; margin-right: 3px; border: 1px solid #8e8f8f; background: linear-gradient(135deg, #c9cdd3, #f6f6f6); box-shadow: inset 0 0 0 2px #f4f4f4; }
input[type="radio"] { border-radius: 50%; margin-right: 4px; }
input[type="checkbox"]:checked::before { content: ""; display: block; width: 4px; height: 8px; margin: 0 0 0 4px; border: solid #354f94; border-width: 0 2px 2px 0; transform: rotate(35deg); }
input[type="radio"]:checked::before { content: ""; display: block; width: 7px; height: 7px; margin: 2px; border-radius: 50%; background: radial-gradient(#55bde8, #15405e 70%); }
input[type="radio"]:disabled { border-color: #b1b1b1; }
input[type="radio"]:disabled::before { background: #999; }
fieldset { min-width: 0; border: 1px solid #d5dfe5; border-radius: 3px; }
legend { padding: 0 3px; line-height: 14px; }
.accumulation { padding: 3px 0 0 8px; }
.accumulation legend { margin-left: -3px; }
.accumulation label { height: 20px; margin-bottom: 1px; }
.steps { display: block; width: 43px; height: 20px; margin: 1px 0 4px 108px; border: 1px solid #abadb3; }
.definition-row { display: flex; align-items: flex-start; }
.definition-row > label { width: 77px; height: 14px; }
.fields { flex: 1; min-width: 0; }
.fields > label { height: 14px; }
.conditional { display: block; width: 100%; height: 23px; margin: 6px 0 5px; border: 1px solid #afafaf; border-radius: 2px; background: #f0f0f0; }
.fields .caption { display: block; height: 14px; line-height: 14px; margin: 3px 0 2px; }
.field { height: 23px; display: flex; align-items: center; padding: 0 2px; border: 1px solid #e1e3e8; border-top-color: #abadb3; }
.field input { flex: 1; min-width: 0; height: 20px; outline: 0; font: 12px "Liberation Sans", Arial, sans-serif; }
.field input::placeholder { color: #a0a0a0; opacity: 1; }
.field button { width: 16px; height: 17px; line-height: 12px; }
.field.tall { height: 39px; }
.tall button { height: 33px; }
.code { flex: 1; align-self: stretch; padding: 4px 5px; font: 12px/14px "Liberation Sans", Arial, sans-serif; outline: 0; }
.code b { font-weight: normal; color: #00f; }
.code em { font-style: normal; color: #800000; }
.flags { padding: 8px 0 0 8px; }
.flags label { height: 21px; }
.groups { display: flex; gap: 12px; margin-top: 9px; }
.display { width: 185px; padding: 2px 4px 5px 8px; }
.total { flex: 1; padding: 2px 0 5px 8px; }
.groups legend { margin-left: -3px; }
.groups label { height: 20px; }
.option { display: flex; justify-content: space-between; align-items: center; margin-top: 3px; }
.option.end { justify-content: flex-end; }
select { width: 90px; height: 23px; padding: 0 4px; appearance: none; border: 1px solid #abadb3; border-radius: 2px; background: #fff; }
.option select { background: conic-gradient(from -45deg at 50% 100%, #000 90deg, transparent 0) right 4px center / 8px 4px no-repeat, #fff; }
.total label { color: #7c7c7c; margin-bottom: 3px; }
.total select { width: 111px; margin: 0 0 0 19px; display: block; }
```
